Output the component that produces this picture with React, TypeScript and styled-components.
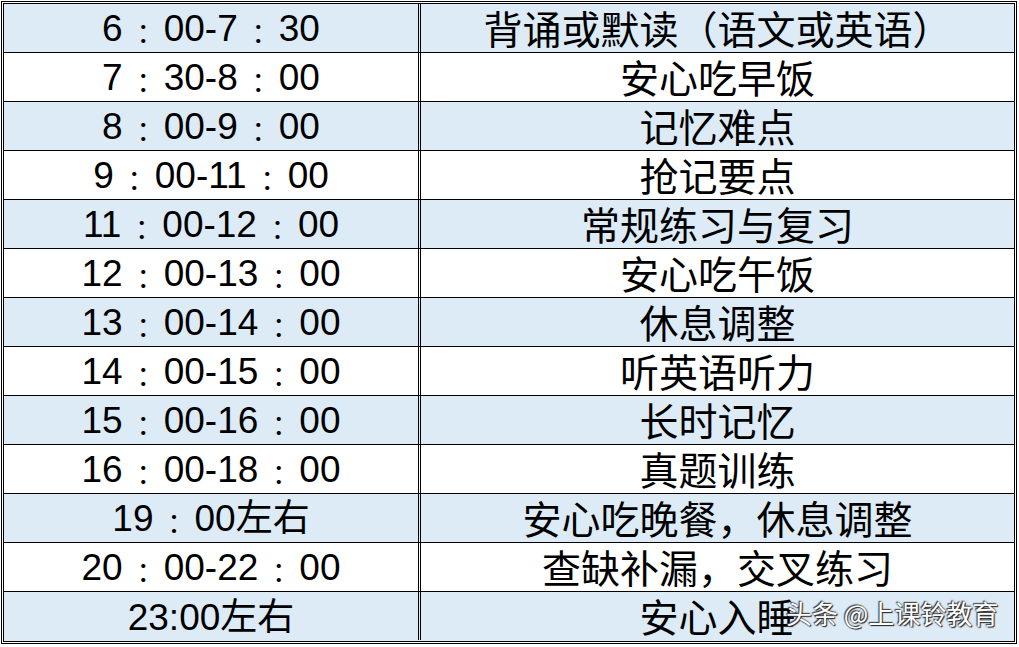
import React from "react";
import styled, { createGlobalStyle } from "styled-components";

const GlobalStyle = createGlobalStyle`
	html, body {
		margin: 0;
		padding: 0;
		background: #ffffff;
	}
	body {
		font-family: "Liberation Sans", "Noto Sans CJK SC", sans-serif;
	}
`;

const schedule = [
	{ time: "6：00-7：30", task: "背诵或默读（语文或英语）" },
	{ time: "7：30-8：00", task: "安心吃早饭" },
	{ time: "8：00-9：00", task: "记忆难点" },
	{ time: "9：00-11：00", task: "抢记要点" },
	{ time: "11：00-12：00", task: "常规练习与复习" },
	{ time: "12：00-13：00", task: "安心吃午饭" },
	{ time: "13：00-14：00", task: "休息调整" },
	{ time: "14：00-15：00", task: "听英语听力" },
	{ time: "15：00-16：00", task: "长时记忆" },
	{ time: "16：00-18：00", task: "真题训练" },
	{ time: "19：00左右", task: "安心吃晚餐，休息调整" },
	{ time: "20：00-22：00", task: "查缺补漏，交叉练习" },
	{ time: "23:00左右", task: "安心入睡" },
];

const Page = styled.div`
	padding: 1px 0 0 1px;
	position: relative;
	width: 1019px;
	height: 647px;
	box-sizing: border-box;
`;

const Sheet = styled.div`
	width: 1016px;
	box-sizing: border-box;
	border: 3px double #000;
	display: flex;
	flex-direction: column;
`;

const Row = styled.div<{ $shaded: boolean; $last: boolean }>`
	display: grid;
	grid-template-columns: 417px 593px;
	height: 49px;
	box-sizing: border-box;
	border-bottom: ${(p) => (p.$last ? "none" : "1px solid #000")};
	background: ${(p) => (p.$shaded ? "#ddebf7" : "#ffffff")};
`;

const TimeCell = styled.div`
	display: flex;
	align-items: center;
	justify-content: center;
	font-family: "Liberation Sans", "Noto Sans CJK SC", sans-serif;
	font-size: 37px;
	line-height: 44px;
	height: 48px;
	color: #000;
	white-space: nowrap;
	box-sizing: border-box;
	padding-top: 3px;
	border-right: 3px double #000;
`;

const Colon = styled.span`
	display: inline-block;
	width: 41px;
	text-align: center;
	font-family: "Noto Sans CJK JP", sans-serif;
	font-size: 27px;
	line-height: 44px;
	transform: translateY(3px);
`;

const TaskCell = styled.div`
	display: flex;
	align-items: center;
	justify-content: center;
	font-family: "Noto Sans CJK SC", sans-serif;
	font-size: 39px;
	line-height: 44px;
	height: 48px;
	color: #000;
	white-space: nowrap;
	box-sizing: border-box;
	padding-bottom: 2px;
`;

const Watermark = styled.div`
	position: absolute;
	left: 786px;
	top: 597px;
	font-family: "Noto Sans CJK SC", sans-serif;
	font-size: 26px;
	line-height: 1.2;
	color: #ffffff;
	white-space: nowrap;
	text-shadow: 0 0 2px #333, 1px 1px 1px #222, -1px -1px 1px #444;
`;

const renderTime = (time: string) =>
	time.split("：").map((part, idx, arr) => (
		<React.Fragment key={idx}>
			{part}
			{idx < arr.length - 1 && <Colon>：</Colon>}
		</React.Fragment>
	));

export default function App() {
	return (
		<Page>
			<GlobalStyle />
			<Sheet>
				{schedule.map((item, i) => (
					<Row key={i} $shaded={i % 2 === 0} $last={i === schedule.length - 1}>
						<TimeCell>
							<span>{renderTime(item.time)}</span>
						</TimeCell>
						<TaskCell>{item.task}</TaskCell>
					</Row>
				))}
			</Sheet>
			<Watermark>头条 @上课铃教育</Watermark>
		</Page>
	);
}
